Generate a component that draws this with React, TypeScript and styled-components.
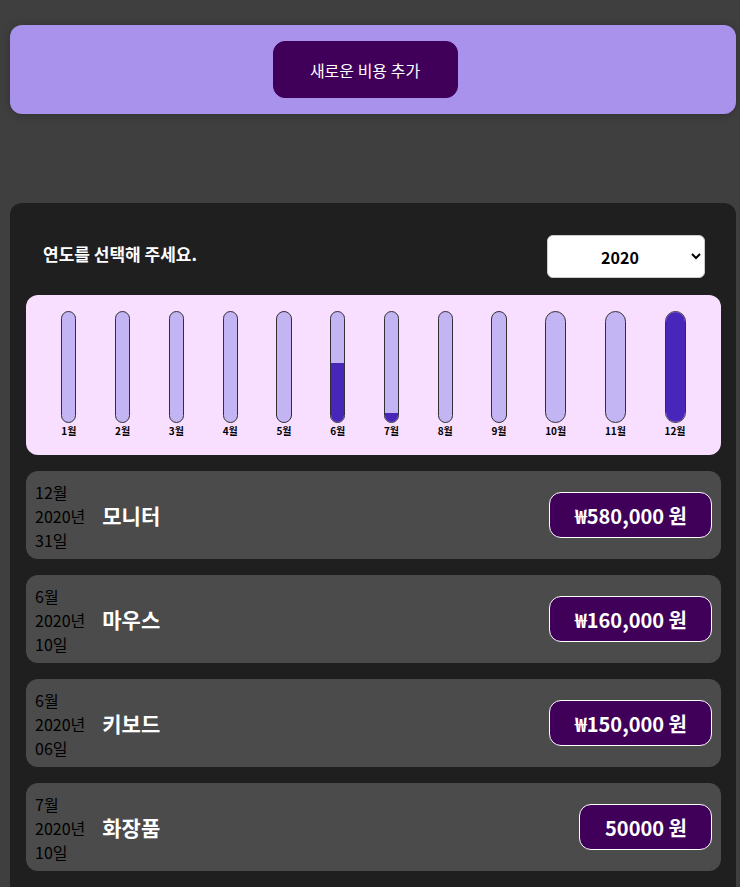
import React from "react";
import styled, { createGlobalStyle } from "styled-components";

const Global = createGlobalStyle`
  html, body { margin: 0; padding: 0; background: #3f3f3f; }
  body { font-family: "Noto Sans CJK KR", "Noto Sans", sans-serif; }
  * { box-sizing: border-box; }
`;

const Page = styled.div`
  padding: 25px 4px 0 10px;
`;

const NewExpense = styled.section`
  background: #a892ec;
  border-radius: 12px;
  height: 89px;
  display: flex;
  justify-content: center;
  align-items: flex-start;
  padding: 16px 16px 0 0;
  box-shadow: 0 1px 8px rgba(0, 0, 0, 0.25);
`;

const AddButton = styled.button`
  width: 185px;
  height: 57px;
  background: #40005a;
  color: #fff;
  border: 1px solid #40005a;
  border-radius: 12px;
  font-family: "Noto Sans CJK KR", sans-serif;
  font-size: 16px;
`;

const Panel = styled.section`
  margin-top: 89px;
  background: #1f1f1f;
  border-radius: 12px 12px 0 0;
  padding: 32px 15px 16px 16px;
  min-height: 700px;
`;

const FilterRow = styled.div`
  display: flex;
  justify-content: space-between;
  align-items: center;
  padding: 0 16px 0 17px;
`;

const FilterLabel = styled.label`
  color: #fff;
  font-weight: 700;
  font-size: 17px;
  margin-top: -6px;
`;

const YearSelect = styled.select`
  width: 158px;
  height: 43px;
  border-radius: 6px;
  border: 1px solid #ccc;
  background: #fff;
  font-family: "Noto Sans CJK KR", sans-serif;
  font-weight: 700;
  font-size: 16px;
  text-align: center;
  text-align-last: center;
  color: #000;
`;

const Chart = styled.div`
  margin-top: 17px;
  height: 160px;
  padding: 16px 16px;
  border-radius: 12px;
  background: #f8dfff;
  display: flex;
  justify-content: space-around;
`;

const BarCol = styled.div`
  height: 100%;
  display: flex;
  flex-direction: column;
  align-items: stretch;
`;

const BarInner = styled.div`
  height: 113px;
  border: 1px solid #313131;
  border-radius: 12px;
  background: #c3b4f3;
  overflow: hidden;
  display: flex;
  flex-direction: column;
  justify-content: flex-end;
`;

const BarFill = styled.div`
  background: #4826b9;
  width: 100%;
`;

const BarLabel = styled.div`
  font-weight: 700;
  font-size: 10px;
  text-align: center;
  line-height: 16px;
  color: #000;
`;

const List = styled.ul`
  list-style: none;
  margin: 16px 0 0;
  padding: 0;
  display: flex;
  flex-direction: column;
  gap: 16px;
`;

const Item = styled.li`
  height: 88px;
  background: #4b4b4b;
  border-radius: 12px;
  display: flex;
  align-items: center;
  padding: 8px 9px;
`;

const DateBox = styled.div`
  display: flex;
  flex-direction: column;
  color: #000;
  font-size: 16px;
  line-height: 24px;
  margin-top: 2px;
`;

const Desc = styled.div`
  flex: 1;
  display: flex;
  justify-content: space-between;
  align-items: center;
  margin-left: 17px;
`;

const Title = styled.h2`
  margin: 0;
  color: #fff;
  font-size: 21px;
  font-weight: 700;
`;

const Price = styled.div`
  height: 46px;
  padding: 0 24px 0 25px;
  display: flex;
  align-items: center;
  background: #40005a;
  border: 1px solid #fff;
  border-radius: 12px;
  color: #fff;
  font-size: 20px;
  font-weight: 700;
`;

const months = ["1월","2월","3월","4월","5월","6월","7월","8월","9월","10월","11월","12월"];
const fills = [0,0,0,0,0,53.4,8.6,0,0,0,0,100];

const items = [
  { m: "12월", y: "2020년", d: "31일", title: "모니터", price: "₩580,000 원" },
  { m: "6월", y: "2020년", d: "10일", title: "마우스", price: "₩160,000 원" },
  { m: "6월", y: "2020년", d: "06일", title: "키보드", price: "₩150,000 원" },
  { m: "7월", y: "2020년", d: "10일", title: "화장품", price: "50000 원" },
];

export default function App() {
  return (
    <>
      <Global />
      <Page>
        <NewExpense>
          <AddButton>새로운 비용 추가</AddButton>
        </NewExpense>
        <Panel>
          <FilterRow>
            <FilterLabel>연도를 선택해 주세요.</FilterLabel>
            <YearSelect defaultValue="2020">
              <option value="2022">2022</option>
              <option value="2021">2021</option>
              <option value="2020">2020</option>
              <option value="2019">2019</option>
            </YearSelect>
          </FilterRow>
          <Chart>
            {months.map((m, i) => (
              <BarCol key={m}>
                <BarInner>
                  <BarFill style={{ height: `${fills[i]}%` }} />
                </BarInner>
                <BarLabel>{m}</BarLabel>
              </BarCol>
            ))}
          </Chart>
          <List>
            {items.map((it, i) => (
              <Item key={i}>
                <DateBox>
                  <span>{it.m}</span>
                  <span>{it.y}</span>
                  <span>{it.d}</span>
                </DateBox>
                <Desc>
                  <Title>{it.title}</Title>
                  <Price>{it.price}</Price>
                </Desc>
              </Item>
            ))}
          </List>
        </Panel>
      </Page>
    </>
  );
}
